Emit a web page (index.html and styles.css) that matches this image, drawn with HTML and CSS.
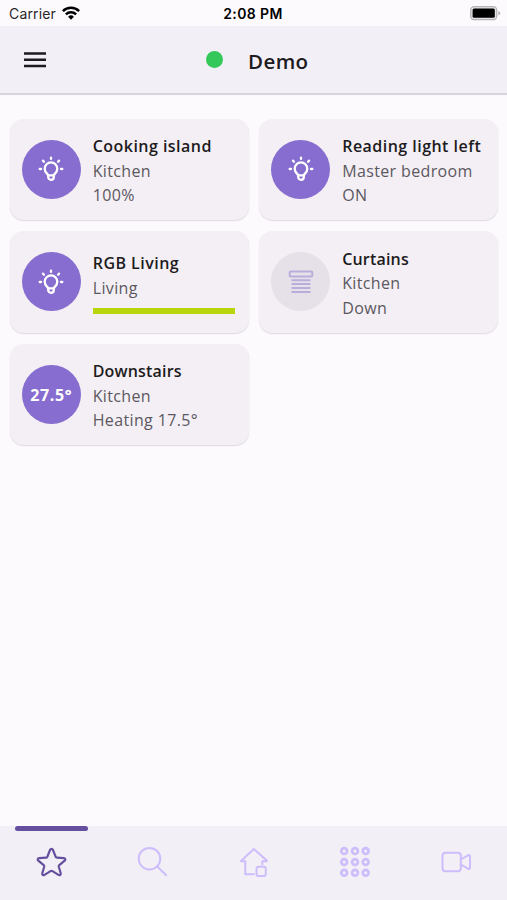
FILE: index.html
```html
<!DOCTYPE html>
<html lang="en">
<head>
<meta charset="utf-8">
<title>Demo</title>
<link rel="stylesheet" href="styles.css">
</head>
<body>
<svg width="0" height="0" class="defs">
  <symbol id="bulb" viewBox="0 0 30 30">
    <g fill="none" stroke="#fff" stroke-width="2.300" stroke-linecap="round" stroke-linejoin="round">
      <path d="M12.200 21.500C11.900 19.800 8.700 18.600 8.700 14.700a6.300 6.300 0 0 1 12.600 0c0 3.900-3.200 5.100-3.500 6.800v1.500a2.800 2.800 0 0 1-5.600 0z"/>
      <path d="M12.400 21.300h5.200M15 3.700v1.200M6.900 6.600l1 1.100M23.100 6.600l-1 1.100M3.700 15h1.300M25 15h1.300"/>
    </g>
  </symbol>
</svg>
<div class="status">
  <div class="carrier"><span>Carrier</span>
    <svg width="18" height="14" viewBox="0 0 18 14"><path fill="none" stroke="#000" stroke-width="2.500" d="M.9 5.100a11.500 11.500 0 0 1 16.200 0M3.900 8.300a7.200 7.200 0 0 1 10.200 0"/><path d="M9 13.700l-2.900-2.900a4.100 4.100 0 0 1 5.800 0z"/></svg>
  </div>
  <div class="time">2:08 PM</div>
  <svg class="battery" width="31" height="15" viewBox="0 0 31 15"><rect x=".7" y=".7" width="26" height="13" rx="3.500" fill="#e4e2e4" stroke="#b5b3b5" stroke-width="1.300"/><rect x="2.600" y="2.600" width="22.200" height="9.200" rx="1.500"/><path d="M28.300 5v4.600q1.900-.6 1.900-2.300t-1.900-2.300z" fill="#b5b3b5"/></svg>
</div>
<header class="bar">
  <svg class="menu" width="22" height="16" viewBox="0 0 22 16"><path stroke="#1d1b20" stroke-width="2.500" d="M0 1.600h22M0 7.800h22M0 14h22"/></svg>
  <span class="dot"></span>
  <h1>Demo</h1>
</header>
<main class="grid">
  <section class="card"><div class="disc"><svg width="30" height="30"><use href="#bulb"/></svg></div><div class="info"><h2>Cooking island</h2><p>Kitchen</p><p>100%</p></div></section>
  <section class="card"><div class="disc"><svg width="30" height="30"><use href="#bulb"/></svg></div><div class="info"><h2>Reading light left</h2><p>Master bedroom</p><p>ON</p></div></section>
  <section class="card"><div class="disc"><svg width="30" height="30"><use href="#bulb"/></svg></div><div class="info"><h2>RGB Living</h2><p>Living</p><div class="color"></div></div></section>
  <section class="card"><div class="disc off"><svg width="30" height="30" viewBox="0 0 30 30"><g fill="none" stroke="#b9addc" stroke-width="2"><rect x="3.700" y="4.500" width="22.600" height="4.900" rx="1.200"/><path d="M5.500 13.200h19M5.500 17h19M5.500 20.900h19M5.500 25h19"/></g></svg></div><div class="info"><h2 class="tight">Curtains</h2><p>Kitchen</p><p>Down</p></div></section>
  <section class="card"><div class="disc temp">27.5°</div><div class="info"><h2 class="tight">Downstairs</h2><p>Kitchen</p><p>Heating 17.5°</p></div></section>
</main>
<nav class="tabs">
  <a class="tab active"><svg width="32" height="32" viewBox="-.5 0 32 32"><path d="M16 2.800q1 0 1.500 1.200l2.700 6.900q.3.800 1.200.8l6.900.4c1.600.1 2 1.500.9 2.500l-5.400 4.600q-.7.600-.5 1.500l1.900 6.500c.4 1.600-.9 2.500-2.200 1.700l-6-3.800q-1-.6-2 0l-6 3.800c-1.300.8-2.600-.1-2.200-1.700l1.900-6.500q.2-.9-.5-1.500l-5.400-4.600c-1.100-1-.7-2.400.9-2.500l6.900-.4q.9 0 1.200-.8l2.700-6.900q.5-1.200 1.500-1.200z"/></svg></a>
  <a class="tab"><svg width="32" height="32" viewBox="-.5 0 32 32"><circle cx="13" cy="12.700" r="10.800"/><path d="M20.800 20.500l8.900 8.700"/></svg></a>
  <a class="tab"><svg width="32" height="32" viewBox="-.8 0 32 32"><path d="M16 28.300H7.500V15.200H3L16 3l13 11.500v.7h-4.500v3.300"/><rect x="18.700" y="20.800" width="9.300" height="9.200" rx="2"/></svg></a>
  <a class="tab"><svg width="32" height="32" viewBox="0 0 32 32"><g stroke-width="2.700"><circle cx="5.200" cy="5.100" r="2.900"/><circle cx="16" cy="5.100" r="2.900"/><circle cx="26.700" cy="5.100" r="2.900"/><circle cx="5.200" cy="16" r="2.900"/><circle cx="16" cy="16" r="2.900"/><circle cx="26.700" cy="16" r="2.900"/><circle cx="5.200" cy="26.700" r="2.900"/><circle cx="16" cy="26.700" r="2.900"/><circle cx="26.700" cy="26.700" r="2.900"/></g></svg></a>
  <a class="tab"><svg width="32" height="32" viewBox="0 0 32 32"><rect x="2.500" y="6.700" width="18.300" height="18.600" rx="3"/><path d="M20.800 13.500l7.200-4.200q2-.8 2 1v11.400q0 1.800-2 1l-7.200-4.200"/></svg></a>
</nav>
</body>
</html>
```

FILE: styles.css
```css
* { box-sizing: border-box; }
body {
  margin: 0;
  height: 900px;
  display: flex;
  flex-direction: column;
  background: #fdfafe;
  color: #1d1b20;
  font-family: "Open Sans", "Noto Sans", sans-serif;
  overflow: hidden;
}
h1, h2, p { margin: 0; }
.defs { position: absolute; }
.status {
  height: 26px;
  display: grid;
  grid-template-columns: 1fr auto 1fr;
  align-items: center;
  padding: 1px 6px 0 9px;
  font-family: Inter, sans-serif;
  font-size: 14px;
  color: #000;
}
.carrier { display: flex; align-items: center; gap: 6px; color: #29272a; }
.carrier span { letter-spacing: .15px; }
.carrier svg { margin-bottom: 2px; }
.time { font-weight: 600; margin-left: -4px; letter-spacing: .4px; }
.battery { justify-self: end; }
.bar {
  height: 69px;
  display: flex;
  align-items: center;
  padding-left: 24px;
  background: #f3eff6;
  border-bottom: 2px solid #d9d4dc;
}
.dot { width: 17px; height: 17px; border-radius: 50%; background: #34c759; margin-left: 160px; }
h1 { margin: 3px 0 0 25px; font-size: 20.5px; font-weight: 600; line-height: 28px; letter-spacing: .4px; }
.grid {
  flex: 1;
  padding: 23.8px 9px 0 9.7px;
  display: grid;
  grid-template-columns: 239px 239px;
  grid-auto-rows: 101.400px;
  gap: 11px 10.500px;
  align-content: start;
}
.card {
  display: flex;
  align-items: center;
  gap: 12px;
  padding: 0 14px 0 12px;
  border-radius: 14px;
  background: #f4eff5;
  box-shadow: 0 1px 1.500px #ddd8e0;
}
.disc {
  width: 59px;
  height: 59px;
  border-radius: 50%;
  flex: none;
  display: flex;
  align-items: center;
  justify-content: center;
  background: #876dcf;
}
.off { background: #e6e0e9; }
.temp { color: #fff; font-size: 16px; font-weight: 700; letter-spacing: .65px; padding-top: 2px; }
.info { flex: 1; white-space: nowrap; font-size: 16px; line-height: 24.5px; padding-top: 3.4px; }
h2 { font: inherit; font-weight: 600; letter-spacing: .47px; }
.tight { letter-spacing: .18px; }
p { color: #5b585f; letter-spacing: .36px; }
.color { height: 6px; margin: 8px 0 2px; background: #b8d60c; }
.tabs {
  height: 74px;
  display: grid;
  grid-template-columns: repeat(5, 1fr);
  background: #f3eff6;
}
.tab { position: relative; display: flex; justify-content: center; padding-top: 20px; }
.tab svg { fill: none; stroke: #cdbdfb; stroke-width: 2; stroke-linejoin: round; stroke-linecap: round; }
.active svg { stroke: #65509f; stroke-width: 2.200; }
.active::before {
  content: "";
  position: absolute;
  top: 0;
  left: 15px;
  width: 73px;
  height: 5px;
  border-radius: 3px;
  background: #65509f;
}
```
